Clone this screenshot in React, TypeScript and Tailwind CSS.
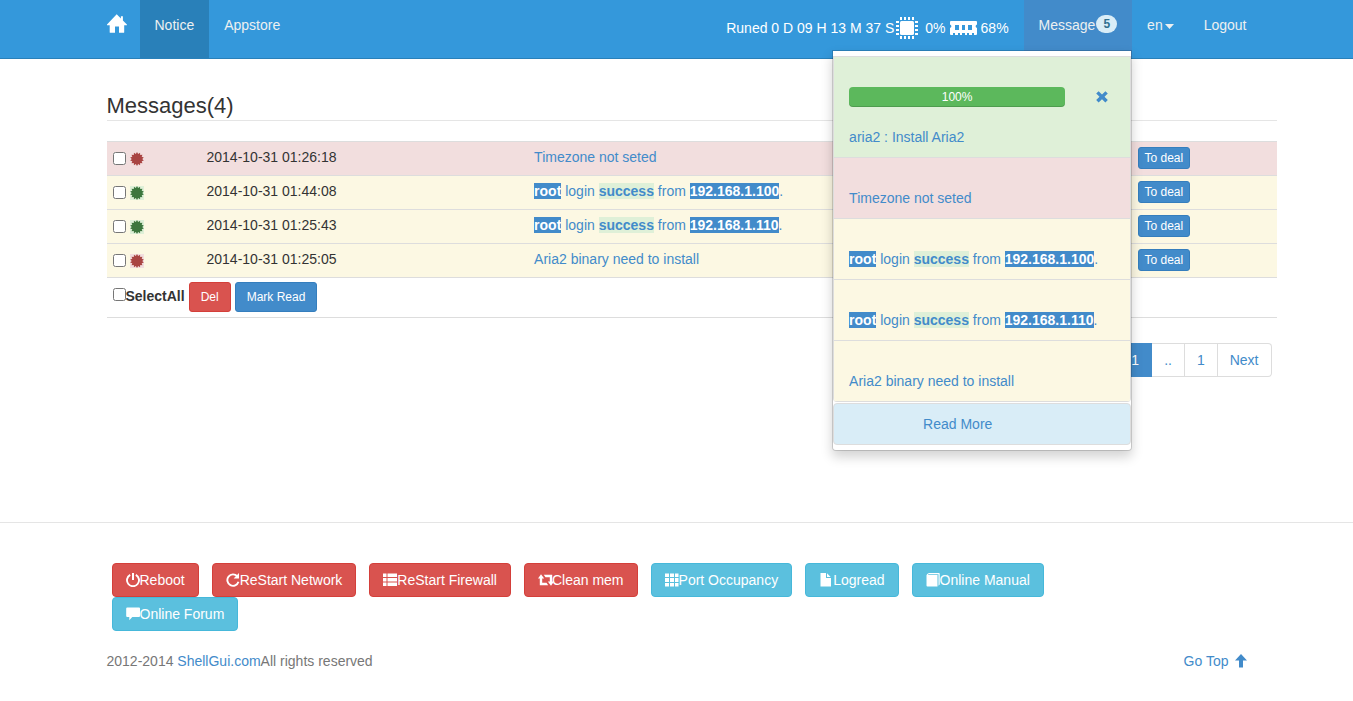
import {ReactNode} from "react";

type Level = "danger" | "success";

interface Message {
	id: number;
	time: string;
	level: Level;
	unsafe?: boolean;
	content: ReactNode;
}

function Login({ip}: {ip: string}) {
	return (
		<>
			<strong className="bg-[#428bca] text-white">root</strong> login{" "}
			<strong className="bg-[#dff0d8]">success</strong> from{" "}
			<strong className="bg-[#428bca] text-white">{ip}</strong>.
		</>
	);
}

const messages: Message[] = [
	{id: 1, time: "2014-10-31 01:26:18", level: "danger", unsafe: true, content: "Timezone not seted"},
	{id: 2, time: "2014-10-31 01:44:08", level: "success", content: <Login ip="192.168.1.100" />},
	{id: 3, time: "2014-10-31 01:25:43", level: "success", content: <Login ip="192.168.1.110" />},
	{id: 4, time: "2014-10-31 01:25:05", level: "danger", content: "Aria2 binary need to install"},
];

// 14 pointed star
const starPoints = Array.from({length: 28}, (_, i) => {
	const r = i % 2 === 0 ? 7 : 5.2;
	const a = (i * Math.PI) / 14;
	return `${(7 + r * Math.sin(a)).toFixed(2)},${(7 - r * Math.cos(a)).toFixed(2)}`;
}).join(" ");

function Certificate({level}: {level: Level}) {
	return (
		<span
			className={
				level === "danger"
					? "mt-px bg-[#f2dede] text-[#a94442]"
					: "mt-px bg-[#dff0d8] text-[#3c763d]"
			}
		>
			<svg className="size-[14px]" viewBox="0 0 14 14" fill="currentColor">
				<polygon points={starPoints} />
			</svg>
		</span>
	);
}

function HomeIcon() {
	return (
		<svg className="h-[19px] w-5" viewBox="0 0 20 19" fill="currentColor">
			<path d="M9.7 0.3 13.9 4.5V2.3H15.900V6.5L19.9 10.6V11.2H17.2V18.2Q17.2 18.8 16.6 18.8H12V12.4H8V18.8H3.3Q2.7 18.8 2.7 18.2V11.2H0V10.6Z" />
		</svg>
	);
}

function ChipIcon() {
	return (
		<svg className="size-[22px]" viewBox="0 0 22 22" fill="currentColor">
			<rect x="4" y="4" width="14" height="14" rx="1.5" />
			{[4, 8, 12, 16].map((p) => (
				<g key={p}>
					<rect x={p} y="0" width="2" height="3" />
					<rect x={p} y="19" width="2" height="3" />
					<rect x="0" y={p} width="3" height="2" />
					<rect x="19" y={p} width="3" height="2" />
				</g>
			))}
		</svg>
	);
}

function RamIcon() {
	return (
		<svg className="h-[14px] w-[27px]" viewBox="0 0 27 14" fill="currentColor">
			<path
				fillRule="evenodd"
				d="M1 0H26Q27 0 27 1V3.5Q25.6 4.2 25.6 5.200T27 7V13Q27 14 26 14H24V12H22V14H19V12H17V14H15V12H12V14H10V12H8V14H5V12H3V14H1Q0 14 0 13V7Q1.400 6.400 1.400 5.200T0 3.500V1Q0 0 1 0ZM5 4V9H9V4ZM12 4V9H15V4ZM18 4V9H22V4Z"
			/>
		</svg>
	);
}

function Icon({children}: {children: ReactNode}) {
	return (
		<svg className="size-[14px] shrink-0" viewBox="0 0 14 14" fill="currentColor">
			{children}
		</svg>
	);
}

const OffIcon = (
	<Icon>
		<path d="M6 0H8V7H6Z" />
		<path d="M4.200 1.900A6 6 0 1 0 9.800 1.900" fill="none" stroke="currentColor" strokeWidth="1.900" />
	</Icon>
);
const RepeatIcon = (
	<Icon>
		<path d="M11.300 3.300A5.700 5.700 0 1 0 12.500 8.800" fill="none" stroke="currentColor" strokeWidth="1.900" />
		<path d="M13 0V5.600H7.600Z" />
	</Icon>
);
const ThListIcon = (
	<Icon>
		<path d="M0 0.500H3.500V4H0ZM4.500 0.500H14V4H4.500ZM0 5H3.500V8.500H0ZM4.500 5H14V8.500H4.500ZM0 9.500H3.500V13H0ZM4.500 9.500H14V13H4.500Z" />
	</Icon>
);
const ThIcon = (
	<Icon>
		<path d="M0 0.500H4V4H0ZM5 0.500H9V4H5ZM10 0.500H13.500V4H10ZM0 5H4V9H0ZM5 5H9V9H5ZM10 5H13.500V9H10ZM0 10H4V13.500H0ZM5 10H9V13.500H5ZM10 10H13.500V13.500H10Z" />
	</Icon>
);
const RetweetIcon = (
	<svg className="-mr-[2px] h-[14px] w-4 shrink-0" viewBox="0 0 16 14" fill="currentColor">
		<path d="M3 1.200 6.200 5.500H4.200V9.800H8.500L10.200 12.200H1.800V5.500H0ZM5.800 1.800H14.200V8.500H16L13 12.800 9.800 8.500H11.800V4.200H7.500Z" />
	</svg>
);
const FileIcon = (
	<Icon>
		<path d="M1.500 0H7V5H12V13.500H1.500ZM8 0.300 11.700 4H8Z" />
	</Icon>
);
const BookIcon = (
	<Icon>
		<path d="M3 0H13Q13.700 0 13.700 0.700V11.500L12.500 12.700V1.200H3Q1.800 1.200 1.800 2H11.500V13.500H1.500Q0.500 13.500 0.500 12.500V2.200Q0.700 0.800 3 0Z" />
	</Icon>
);
const CommentIcon = (
	<Icon>
		<path d="M1.200 0.500H13Q14 0.500 14 1.500V9Q14 10 13 10H6.300L3.300 13.300V10H1.200Q0.200 10 0.200 9V1.500Q0.200 0.500 1.200 0.500Z" />
	</Icon>
);

const actions = [
	{label: "Reboot", icon: OffIcon, danger: true},
	{label: "ReStart Network", icon: RepeatIcon, danger: true},
	{label: "ReStart Firewall", icon: ThListIcon, danger: true},
	{label: "Clean mem", icon: RetweetIcon, danger: true},
	{label: "Port Occupancy", icon: ThIcon},
	{label: "Logread", icon: FileIcon},
	{label: "Online Manual", icon: BookIcon},
	{label: "Online Forum", icon: CommentIcon},
];

function MessageMenu() {
	return (
		<div className="absolute right-0 top-[50px] z-10 w-[300px] rounded-b border border-black/15 bg-white bg-clip-padding py-[5px] text-[#428bca] shadow-[0_6px_12px_rgba(0,0,0,0.175)]">
			<ul className="overflow-hidden rounded-b border-x border-t border-[#ddd]">
				<li className="border-b border-[#ddd] bg-[#dff0d8] px-[15px] pb-[10px] pt-[30px]">
					<div className="mb-5 flex items-center pr-[7px]">
						<div className="h-5 flex-1 rounded bg-[#5cb85c] text-center text-xs leading-5 text-white shadow-[inset_0_-1px_0_rgba(0,0,0,0.15)]">
							100%
						</div>
						<button type="button" aria-label="Remove" className="ml-[31px]">
							<svg className="size-3" viewBox="0 0 12 12" fill="currentColor">
								<path d="M2.600 0.200 6 3.400 9.400 0.200 11.800 2.600 8.500 5.800 11.800 9.100 9.400 11.500 6 8.200 2.600 11.500 0.200 9.100 3.500 5.800 0.200 2.600Z" />
							</svg>
						</button>
					</div>
					<a href="#">aria2 : Install Aria2</a>
				</li>
				{messages.map((m) => (
					<li
						key={m.id}
						className={
							m.unsafe
								? "border-b border-[#ddd] bg-[#f2dede] px-[15px] pb-[10px] pt-[30px]"
								: "border-b border-[#ddd] bg-[#fcf8e3] px-[15px] pb-[10px] pt-[30px]"
						}
					>
						<a href="#">{m.content}</a>
					</li>
				))}
			</ul>
			<a
				href="#"
				className="mt-px block rounded border border-[#ddd] bg-[#d9edf7] py-[10px] pl-[89px]"
			>
				Read More
			</a>
		</div>
	);
}

function Navbar() {
	return (
		<header className="border-b border-[#2980b9] bg-[#3498db] text-[#ecf0f1]">
			<nav className="mx-auto flex h-[58px] max-w-[1170px] pl-[15px]">
				<a href="#" aria-label="Home" className="mr-[13px] pt-[14px] text-white">
					<HomeIcon />
				</a>
				<a href="#" className="bg-[#2980b9] px-[15px] pt-[15px]">Notice</a>
				<a href="#" className="px-[15px] pt-[15px]">Appstore</a>
				<div className="ml-auto flex h-14 items-center pr-[15px] text-white">
					<span>Runed 0 D 09 H 13 M 37 S</span>
					<span className="ml-[2px]"><ChipIcon /></span>
					<span className="ml-[7px]">0%</span>
					<span className="mx-1"><RamIcon /></span>
					<span>68%</span>
				</div>
				<div className="relative bg-[#428bca]">
					<button type="button" className="flex px-[15px] pt-[15px]">
						Message
						<span className="ml-px h-[18px] rounded-[10px] bg-[#d9edf7] px-[7px] text-xs font-bold leading-[18px] text-[#31708f]">
							5
						</span>
					</button>
					<MessageMenu />
				</div>
				<button type="button" className="flex px-[15px] pt-[15px]">
					en
					<svg className="ml-[2px] mt-[9px] h-[5px] w-[9px]" viewBox="0 0 9 5" fill="currentColor">
						<path d="M0 0H9L4.500 5Z" />
					</svg>
				</button>
				<a href="#" className="px-[15px] pt-[15px]">Logout</a>
			</nav>
		</header>
	);
}

export default function App() {
	return (
		<div className="bg-white font-['Liberation_Sans',Arial,sans-serif] text-sm leading-5 text-[#333]">
			<Navbar />
			<main className="mx-auto max-w-[1170px] pt-[35px]">
				<div className="ml-[15px] mr-[-15px]">
					<h1 className="mb-5 border-b border-[#e5e5e5] pb-[2px] text-[22px] leading-6">Messages(4)</h1>
					<table className="w-full table-fixed border-b border-[#ddd]">
						<colgroup>
							<col className="w-[95px]" />
							<col className="w-[28%]" />
							<col />
							<col className="w-36" />
						</colgroup>
						<tbody>
							{messages.map((m) => (
								<tr
									key={m.id}
									className={
										m.unsafe
											? "h-[34px] border-t border-[#ddd] bg-[#f2dede] align-top"
											: "h-[34px] border-t border-[#ddd] bg-[#fcf8e3] align-top"
									}
								>
									<td className="p-[5px]">
										<div className="flex h-[22px] items-center gap-1 pl-px">
											<input type="checkbox" aria-label={m.time} className="size-[13px]" />
											<Certificate level={m.level} />
										</div>
									</td>
									<td className="p-[5px]">{m.time}</td>
									<td className="p-[5px] text-[#428bca]"><a href="#">{m.content}</a></td>
									<td className="p-[5px]">
										<button
											type="button"
											className="block h-[22px] rounded-[3px] border border-[#357ebd] bg-[#428bca] px-[6px] text-xs text-white"
										>
											To deal
										</button>
									</td>
								</tr>
							))}
						</tbody>
						<tfoot>
							<tr className="border-t border-[#ddd]">
								<td colSpan={4} className="px-[5px] pb-[5px] pt-1">
									<div className="flex gap-1">
										<label className="flex pl-px pt-1 font-bold">
											<input type="checkbox" className="mt-[2px] size-[13px]" />
											SelectAll
										</label>
										<button
											type="button"
											className="h-[30px] rounded-[3px] border border-[#d43f3a] bg-[#d9534f] px-[11px] text-xs text-white"
										>
											Del
										</button>
										<button
											type="button"
											className="h-[30px] rounded-[3px] border border-[#357ebd] bg-[#428bca] px-[11px] text-xs text-white"
										>
											Mark Read
										</button>
									</div>
								</td>
							</tr>
						</tfoot>
					</table>
					<div className="mr-[5px] mt-[25px] flex justify-end text-[#428bca]">
						<a href="#" className="border border-[#428bca] bg-[#428bca] px-3 py-[6px] text-white">1</a>
						<a href="#" className="border-y border-r border-[#ddd] px-3 py-[6px]">..</a>
						<a href="#" className="border-y border-r border-[#ddd] px-3 py-[6px]">1</a>
						<a href="#" className="rounded-r border-y border-r border-[#ddd] px-3 py-[6px]">Next</a>
					</div>
				</div>
			</main>
			<footer className="mt-[145px] border-t border-[#e5e5e5] pt-10">
				<div className="mx-auto max-w-[1170px] px-[15px]">
					<div className="flex max-w-[975px] flex-wrap gap-x-[13px] pl-[5px]">
						{actions.map((a) => (
							<button
								key={a.label}
								type="button"
								className={
									a.danger
										? "flex h-[34px] items-center rounded border border-[#d43f3a] bg-[#d9534f] px-[13px] text-white"
										: "flex h-[34px] items-center rounded border border-[#46b8da] bg-[#5bc0de] px-[13px] text-white"
								}
							>
								{a.icon}
								{a.label}
							</button>
						))}
					</div>
					<div className="mt-5 flex justify-between pb-10 text-[#777]">
						<p>
							2012-2014 <a href="#" className="text-[#428bca]">ShellGui.com</a>All rights reserved
						</p>
						<a href="#" className="flex items-center gap-[6px] text-[#428bca]">
							Go Top
							<svg className="h-[14px] w-3" viewBox="0 0 12 14" fill="currentColor">
								<path d="M6 0 12 6.500H8V13.500H4V6.500H0Z" />
							</svg>
						</a>
					</div>
				</div>
			</footer>
		</div>
	);
}
